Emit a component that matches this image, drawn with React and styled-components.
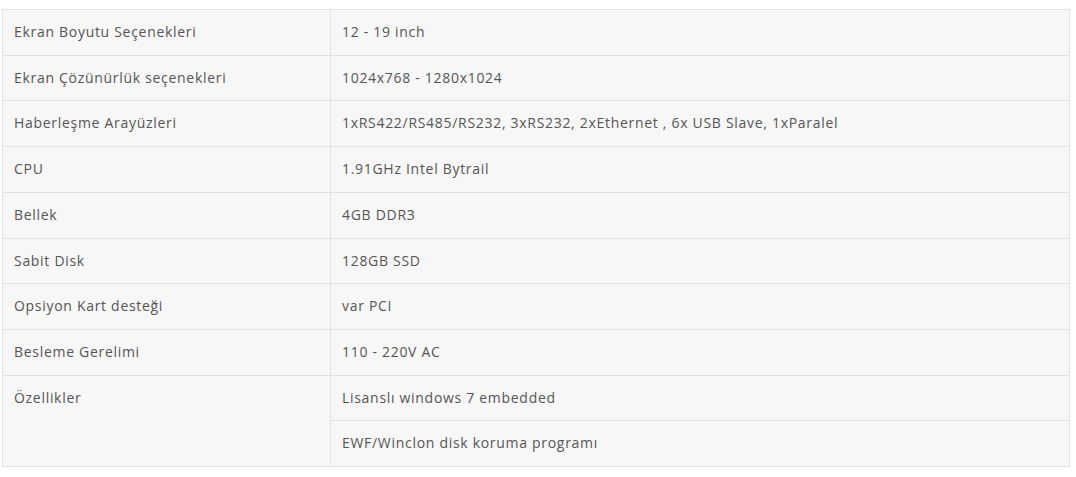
import React from 'react'
import styled, { createGlobalStyle } from 'styled-components'

const Global = createGlobalStyle`
    body {
        margin: 0;
        background: #fff;
        font-family: "Open Sans", "Liberation Sans", sans-serif;
    }
`

const Wrap = styled.div`
    padding: 9px 0 0 2px;
`

const Table = styled.table`
    width: 1068px;
    border-collapse: collapse;
    background: #f7f7f7;
    border: 1px solid #e3e3e3;
`

const Cell = styled.td`
    border: 1px solid #e3e3e3;
    padding: 12px 11px;
    font-size: 14px;
    line-height: 20.7px;
    letter-spacing: 0.7px;
    color: #555;
    vertical-align: top;
    width: ${p => p.$w || 'auto'};
    text-align: left;
`

const rows = [
    ['Ekran Boyutu Seçenekleri', '12 - 19 inch'],
    ['Ekran Çözünürlük seçenekleri', '1024x768 - 1280x1024'],
    ['Haberleşme Arayüzleri', '1xRS422/RS485/RS232, 3xRS232, 2xEthernet , 6x USB Slave, 1xParalel'],
    ['CPU', '1.91GHz Intel Bytrail'],
    ['Bellek', '4GB DDR3'],
    ['Sabit Disk', '128GB SSD'],
    ['Opsiyon Kart desteği', 'var PCI'],
    ['Besleme Gerelimi', '110 - 220V AC'],
]

export default function App() {
    return (
        <>
            <Global />
            <Wrap>
                <Table>
                    <tbody>
                        {rows.map(([k, v], i) => (
                            <tr key={i}>
                                <Cell $w="305px">{k}</Cell>
                                <Cell>{v}</Cell>
                            </tr>
                        ))}
                        <tr>
                            <Cell rowSpan={2}>Özellikler</Cell>
                            <Cell>Lisanslı windows 7 embedded</Cell>
                        </tr>
                        <tr>
                            <Cell>EWF/Winclon disk koruma programı</Cell>
                        </tr>
                    </tbody>
                </Table>
            </Wrap>
        </>
    )
}
